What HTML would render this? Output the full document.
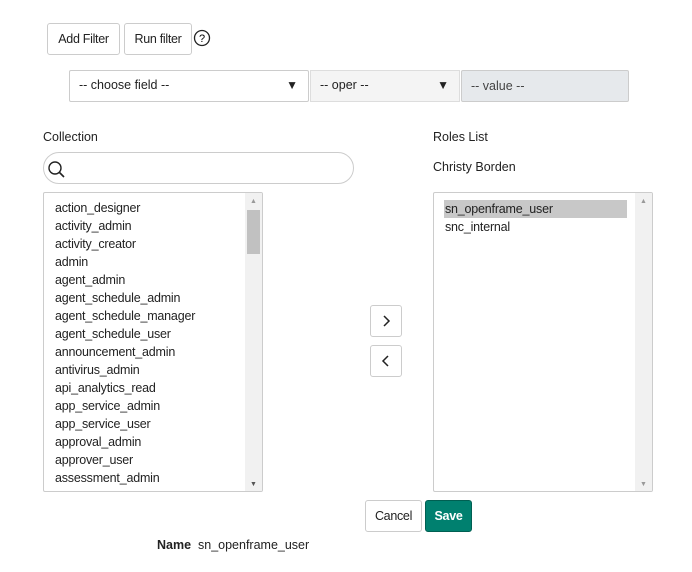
<!DOCTYPE html>
<html><head><style>
body{margin:0;width:692px;height:572px;background:#fff;font-family:"Liberation Sans",sans-serif;font-size:12.5px;color:#222;position:relative;overflow:hidden}
.a{position:absolute;box-sizing:border-box}
.btn{border:1px solid #ccc;border-radius:3px;background:#fff;display:flex;align-items:center;justify-content:center;letter-spacing:-0.3px}
.list div{height:18px;line-height:18px;padding-left:11px;letter-spacing:-0.2px}
.sb{position:absolute;right:0;top:0;bottom:0;width:17px;background:#f1f1f1}
</style></head><body>
<div class="a btn" style="left:47px;top:23px;width:73px;height:32px">Add Filter</div>
<div class="a btn" style="left:124px;top:23px;width:68px;height:32px">Run filter</div>
<svg class="a" style="left:193px;top:29px" width="18" height="18"><circle cx="9" cy="9" r="7.5" fill="none" stroke="#222" stroke-width="1.3"/><text x="9" y="13" text-anchor="middle" font-size="11" font-family="Liberation Sans">?</text></svg>
<div class="a" style="left:69px;top:70px;width:240px;height:32px;border:1px solid #ccc;border-radius:2px;padding:7px 0 0 9px">-- choose field --<span style="position:absolute;right:10px;top:7px;font-size:12px">▼</span></div>
<div class="a" style="left:310px;top:70px;width:150px;height:32px;border:1px solid #ddd;background:#f4f4f4;padding:7px 0 0 9px">-- oper --<span style="position:absolute;right:10px;top:7px;font-size:12px">▼</span></div>
<div class="a" style="left:461px;top:70px;width:168px;height:32px;border:1px solid #ccc;background:#e6e9ec;border-radius:2px;padding:8px 0 0 9px;color:#444">-- value --</div>
<div class="a" style="left:43px;top:130px">Collection</div>
<div class="a" style="left:433px;top:130px">Roles List</div>
<div class="a" style="left:433px;top:160px">Christy Borden</div>
<div class="a" style="left:43px;top:152px;width:311px;height:32px;border:1px solid #ccc;border-radius:16px"></div>
<svg class="a" style="left:46px;top:158px" width="24" height="24"><circle cx="9" cy="10" r="6" fill="none" stroke="#222" stroke-width="1.4"/><line x1="13.5" y1="14.5" x2="18" y2="19" stroke="#222" stroke-width="1.6"/></svg>
<div class="a list" style="left:43px;top:192px;width:220px;height:300px;border:1px solid #ccc;border-radius:2px;padding-top:6px;overflow:hidden">
<div>action_designer</div><div>activity_admin</div><div>activity_creator</div><div>admin</div><div>agent_admin</div><div>agent_schedule_admin</div><div>agent_schedule_manager</div><div>agent_schedule_user</div><div>announcement_admin</div><div>antivirus_admin</div><div>api_analytics_read</div><div>app_service_admin</div><div>app_service_user</div><div>approval_admin</div><div>approver_user</div><div>assessment_admin</div>
<span class="sb"><span style="position:absolute;left:2px;top:17px;width:13px;height:44px;background:#c1c1c1"></span><span style="position:absolute;left:5px;top:5px;font-size:7px;color:#999">▲</span><span style="position:absolute;left:5px;bottom:3px;font-size:7px;color:#555">▼</span></span>
</div>
<div class="a list" style="left:433px;top:192px;width:220px;height:300px;border:1px solid #ccc;border-radius:2px;padding-top:7px;overflow:hidden">
<div style="background:#c8c8c8;margin-left:10px;width:182px;padding-left:1px">sn_openframe_user</div><div>snc_internal</div>
<span class="sb"><span style="position:absolute;left:5px;top:5px;font-size:7px;color:#999">▲</span><span style="position:absolute;left:5px;bottom:3px;font-size:7px;color:#999">▼</span></span>
</div>
<div class="a btn" style="left:370px;top:305px;width:32px;height:32px"><svg width="12" height="14"><path d="M4 2l5 5-5 5" fill="none" stroke="#222" stroke-width="1.5"/></svg></div>
<div class="a btn" style="left:370px;top:345px;width:32px;height:32px"><svg width="12" height="14"><path d="M8 2L3 7l5 5" fill="none" stroke="#222" stroke-width="1.5"/></svg></div>
<div class="a btn" style="left:365px;top:500px;width:57px;height:32px">Cancel</div>
<div class="a btn" style="left:425px;top:500px;width:47px;height:32px;background:#00806f;border-color:#005f52;color:#fff;font-weight:bold">Save</div>
<div class="a" style="left:157px;top:538px"><b>Name</b>&nbsp; sn_openframe_user</div>
</body></html>
